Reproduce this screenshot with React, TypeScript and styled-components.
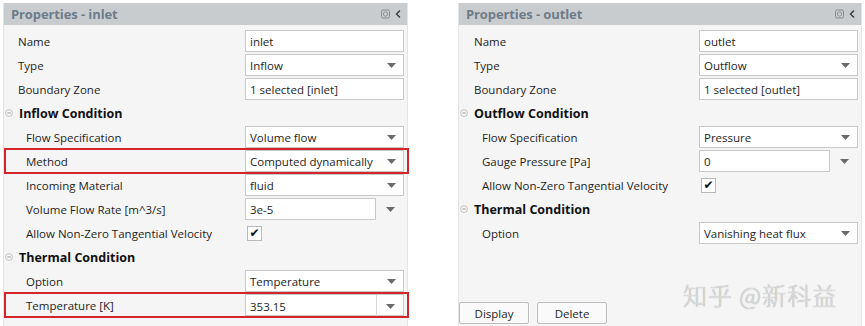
import styled, { createGlobalStyle } from "styled-components";

type Field =
  | { kind: "text" | "select" | "split" | "combo"; label: string; value: string; hot?: boolean }
  | { kind: "check"; label: string; hot?: boolean }
  | { kind: "section"; label: string };

const inletFields: Field[] = [
  { kind: "text", label: "Name", value: "inlet" },
  { kind: "select", label: "Type", value: "Inflow" },
  { kind: "text", label: "Boundary Zone", value: "1 selected [inlet]" },
  { kind: "section", label: "Inflow Condition" },
  { kind: "select", label: "Flow Specification", value: "Volume flow" },
  { kind: "select", label: "Method", value: "Computed dynamically", hot: true },
  { kind: "select", label: "Incoming Material", value: "fluid" },
  { kind: "split", label: "Volume Flow Rate [m^3/s]", value: "3e-5" },
  { kind: "check", label: "Allow Non-Zero Tangential Velocity" },
  { kind: "section", label: "Thermal Condition" },
  { kind: "select", label: "Option", value: "Temperature" },
  { kind: "combo", label: "Temperature [K]", value: "353.15", hot: true },
];

const outletFields: Field[] = [
  { kind: "text", label: "Name", value: "outlet" },
  { kind: "select", label: "Type", value: "Outflow" },
  { kind: "text", label: "Boundary Zone", value: "1 selected [outlet]" },
  { kind: "section", label: "Outflow Condition" },
  { kind: "select", label: "Flow Specification", value: "Pressure" },
  { kind: "split", label: "Gauge Pressure [Pa]", value: "0" },
  { kind: "check", label: "Allow Non-Zero Tangential Velocity" },
  { kind: "section", label: "Thermal Condition" },
  { kind: "select", label: "Option", value: "Vanishing heat flux" },
];

const Arrow = () => (
  <svg width="9" height="5" viewBox="0 0 9 5">
    <path d="M0 0 H9 L4.5 5 Z" fill="#6a6a6a" />
  </svg>
);

const HeaderIcons = () => (
  <svg width="22" height="10" viewBox="0 0 22 10">
    <rect x="0.5" y="1" width="8" height="8" rx="1.5" fill="none" stroke="#8a8d90" />
    <circle cx="4.5" cy="5" r="2.2" fill="none" stroke="#8a8d90" strokeWidth="0.9" />
    <path d="M19 1.5 L15.5 5 L19 8.5" fill="none" stroke="#3a3a3a" strokeWidth="1.4" />
  </svg>
);

const CollapseIcon = () => (
  <svg width="8" height="8" viewBox="0 0 8 8">
    <circle cx="4" cy="4" r="3.4" fill="#fafafa" stroke="#b4b4b4" strokeWidth="0.8" />
    <path d="M2.3 4 H5.7" stroke="#8c8c8c" strokeWidth="0.9" />
  </svg>
);

const renderValue = (f: Field) => {
  switch (f.kind) {
    case "text":
      return <InputBox>{f.value}</InputBox>;
    case "select":
      return (
        <InputBox>
          <span>{f.value}</span>
          <Arrow />
        </InputBox>
      );
    case "split":
      return (
        <Split>
          <InputBox>{f.value}</InputBox>
          <ArrowSlot>
            <Arrow />
          </ArrowSlot>
        </Split>
      );
    case "combo":
      return (
        <ComboBox>
          <span>{f.value}</span>
          <ArrowSlot $divided>
            <Arrow />
          </ArrowSlot>
        </ComboBox>
      );
    case "check":
      return <CheckBox>✔</CheckBox>;
    default:
      return null;
  }
};

const PropertyList = ({ fields, indent }: { fields: Field[]; indent: number }) => {
  let inSection = false;
  return (
    <Body>
      {fields.map((f, i) => {
        if (f.kind === "section") {
          inSection = true;
          return (
            <SectionRow key={i}>
              <CollapseIcon />
              <span>{f.label}</span>
            </SectionRow>
          );
        }
        return (
          <Row key={i} $hot={f.hot}>
            <Label $indent={inSection ? indent + 8 : indent}>{f.label}</Label>
            {renderValue(f)}
          </Row>
        );
      })}
    </Body>
  );
};

const App = () => {
  return (
    <Page>
      <GlobalStyle />
      <Panel $width={405}>
        <Header>
          <Title>Properties - inlet</Title>
          <HeaderIcons />
        </Header>
        <PropertyList fields={inletFields} indent={14} />
      </Panel>
      <Panel $width={404}>
        <Header>
          <Title>Properties - outlet</Title>
          <HeaderIcons />
        </Header>
        <PropertyList fields={outletFields} indent={15} />
        <Footer>
          <Button>Display</Button>
          <Button>Delete</Button>
        </Footer>
        <Watermark>知乎 @新科益</Watermark>
      </Panel>
    </Page>
  );
};

const GlobalStyle = createGlobalStyle`
  body {
    margin: 0;
    background: #ffffff;
    font-family: "Open Sans", "Noto Sans", sans-serif;
    color: #1e1e1e;
  }
`;

const Page = styled.div`
  display: flex;
  gap: 50px;
  padding: 3px 0 0 3px;
  height: 323px;
  overflow: hidden;
`;

const Panel = styled.div<{ $width: number }>`
  position: relative;
  width: ${(p) => p.$width}px;
  height: 323px;
  display: flex;
  flex-direction: column;
  background: #f5f5f5;
  border-left: 1px solid #e4e4e4;
  border-right: 1px solid #e4e4e4;
  box-sizing: border-box;
`;

const Header = styled.div`
  height: 22px;
  display: flex;
  align-items: center;
  padding: 0 4px 0 7px;
  background: #c9cccf;
`;

const Title = styled.div`
  flex: 1;
  font-size: 13px;
  font-weight: 700;
  color: #6e7c8a;
  letter-spacing: -0.1px;
`;

const Body = styled.div`
  padding-top: 4px;
  display: flex;
  flex-direction: column;
`;

const Row = styled.div<{ $hot?: boolean }>`
  position: relative;
  display: grid;
  grid-template-columns: 1fr 159px;
  align-items: center;
  height: 24px;
  padding-right: 3px;
  font-size: 11.5px;

  &::after {
    content: "";
    display: ${(p) => (p.$hot ? "block" : "none")};
    position: absolute;
    top: -1px;
    bottom: -1px;
    left: 0;
    right: -2px;
    border: 2px solid #d2262c;
    pointer-events: none;
  }
`;

const Label = styled.div<{ $indent: number }>`
  padding-left: ${(p) => p.$indent}px;
  white-space: nowrap;
`;

const InputBox = styled.div`
  height: 22px;
  box-sizing: border-box;
  display: flex;
  align-items: center;
  justify-content: space-between;
  padding: 0 7px 0 4px;
  background: #ffffff;
  border: 1px solid #c9c9c9;
  white-space: nowrap;
`;

const Split = styled.div`
  display: grid;
  grid-template-columns: 131px 1fr;
`;

const ArrowSlot = styled.div<{ $divided?: boolean }>`
  display: flex;
  align-items: center;
  justify-content: center;
  height: 22px;
  border-left: ${(p) => (p.$divided ? "1px solid #d6d6d6" : "none")};
`;

const ComboBox = styled.div`
  height: 22px;
  box-sizing: border-box;
  display: grid;
  grid-template-columns: 1fr 27px;
  align-items: center;
  padding-left: 4px;
  background: #ffffff;
  border: 1px solid #c9c9c9;
`;

const CheckBox = styled.div`
  width: 15px;
  height: 15px;
  box-sizing: border-box;
  margin-left: 2px;
  display: flex;
  align-items: center;
  justify-content: center;
  background: #ffffff;
  border: 1px solid #b9b9b9;
  font-family: "DejaVu Sans", sans-serif;
  font-size: 12px;
  font-weight: 700;
  color: #111;
`;

const SectionRow = styled.div`
  display: flex;
  align-items: center;
  gap: 6px;
  height: 24px;
  padding-left: 1px;
  font-size: 12.5px;
  font-weight: 700;
  color: #111;
`;

const Footer = styled.div`
  margin-top: auto;
  margin-bottom: 2px;
  display: flex;
  gap: 8px;
`;

const Button = styled.div`
  width: 70px;
  height: 22px;
  box-sizing: border-box;
  display: flex;
  align-items: center;
  justify-content: center;
  background: #fafafa;
  border: 1px solid #bdbdbd;
  border-radius: 2px;
  font-size: 11.5px;
`;

const Watermark = styled.div`
  position: absolute;
  left: 224px;
  top: 274px;
  font-family: "Noto Sans CJK SC", sans-serif;
  font-size: 24px;
  font-weight: 300;
  color: #dcdcdc;
  letter-spacing: 1px;
  text-shadow: 0 0 1px #9a9a9a;
`;

export default App;
